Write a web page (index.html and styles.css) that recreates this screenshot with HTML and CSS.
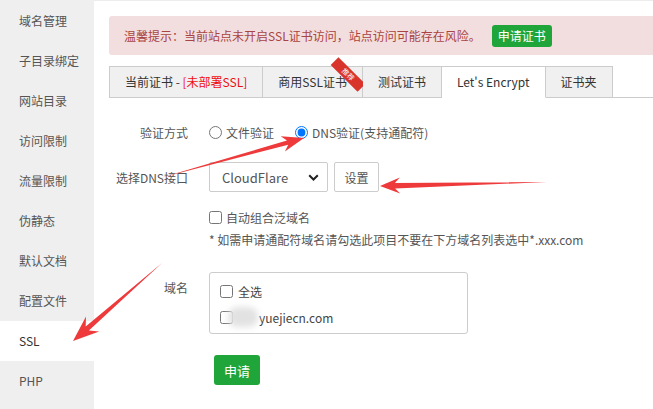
FILE: index.html
```html
<!DOCTYPE html>
<html lang="zh-CN">
<head>
    <meta charset="UTF-8">
    <meta name="viewport" content="width=device-width, initial-scale=1.0">
    <title>网站设置 - SSL</title>
    <link rel="stylesheet" href="styles.css">
</head>
<body>
    <div class="page">
        <!-- left menu -->
        <aside class="side">
            <a class="side-item">域名管理</a>
            <a class="side-item">子目录绑定</a>
            <a class="side-item">网站目录</a>
            <a class="side-item">访问限制</a>
            <a class="side-item">流量限制</a>
            <a class="side-item">伪静态</a>
            <a class="side-item">默认文档</a>
            <a class="side-item">配置文件</a>
            <a class="side-item active">SSL</a>
            <a class="side-item">PHP</a>
        </aside>

        <main class="main">
            <div class="alert">
                <span>温馨提示：当前站点未开启SSL证书访问，站点访问可能存在风险。</span>
                <button class="btn btn-green btn-sm">申请证书</button>
            </div>

            <ul class="tabs">
                <li>当前证书 - <span class="red">[未部署SSL]</span></li>
                <li class="has-badge">商用SSL证书<span class="badge">推荐</span></li>
                <li>测试证书</li>
                <li class="on">Let's Encrypt</li>
                <li>证书夹</li>
            </ul>

            <form class="ssl-form" onsubmit="return false">
                <div class="row row-1">
                    <span class="label">验证方式</span>
                    <label class="opt"><input type="radio" name="check_type"> 文件验证</label>
                    <label class="opt"><input type="radio" name="check_type" checked> DNS验证(支持通配符)</label>
                </div>
                <div class="row row-2">
                    <span class="label">选择DNS接口</span>
                    <div class="select">
                        <span>CloudFlare</span>
                        <svg width="11" height="7" viewBox="0 0 11 7"><path d="M1.2 1.2 5.5 5.5 9.8 1.2" fill="none" stroke="#222" stroke-width="2"/></svg>
                    </div>
                    <button type="button" class="btn btn-line">设置</button>
                </div>
                <div class="row row-3">
                    <span class="label"></span>
                    <label class="opt"><input type="checkbox"> 自动组合泛域名</label>
                </div>
                <div class="row row-4">
                    <span class="label"></span>
                    <span class="note">* 如需申请通配符域名请勾选此项目不要在下方域名列表选中*.xxx.com</span>
                </div>
                <div class="row row-5">
                    <span class="label label-top">域名</span>
                    <div class="domains">
                        <label class="domain"><input type="checkbox"> 全选</label>
                        <label class="domain"><input type="checkbox"><span class="mask"></span>yuejiecn.com</label>
                    </div>
                </div>
                <div class="row row-6">
                    <span class="label"></span>
                    <button class="btn btn-green btn-apply">申请</button>
                </div>
            </form>
        </main>
    </div>

    <!-- red hand-drawn pointers -->
    <svg class="marks" width="653" height="409" viewBox="0 0 653 409">
        <polygon points="160,178 288.2,144.7 284.9,151.6 304,138 280.7,136.2 287,140.5"/>
        <polygon points="547,182 394.9,183 399.8,177.5 380,186 400.2,193.5 395.1,188.6"/>
        <polygon points="162,263 85.7,326.6 86,316.4 73,341 99.2,331.4 88.9,330.4"/>
    </svg>
</body>
</html>
```

FILE: styles.css
```css
body {
    margin: 0;
    padding: 0;
    font-family: "Noto Sans CJK SC", "Noto Sans", sans-serif;
    font-size: 12px;
    color: #333;
    background-color: #fff;
    position: relative;
    overflow: hidden;
}
.page {
    display: flex;
    height: 409px;
}
.side {
    width: 94px;
    flex: none;
    background-color: #efefef;
    padding-top: 1px;
}
.side-item {
    display: block;
    height: 40px;
    line-height: 40px;
    padding-left: 19px;
    color: #555;
}
.side-item.active {
    background-color: #fff;
    color: #333;
}
.main {
    flex: 1;
    min-width: 0;
    border-top: 1px solid #ececec;
    padding-left: 15px;
}
.alert {
    display: flex;
    align-items: center;
    height: 39px;
    margin-top: 15px;
    padding: 0 15px;
    background-color: #f2dede;
    color: #a94442;
    border-radius: 3px 0 0 3px;
    white-space: nowrap;
}
.btn {
    font-family: inherit;
    cursor: pointer;
    border-radius: 3px;
}
.btn-green {
    background-color: #20a53a;
    color: #fff;
    border: none;
}
.btn-sm {
    height: 22px;
    padding: 0 6px;
    margin-left: 11px;
    font-size: 12px;
}
.tabs {
    display: flex;
    list-style: none;
    margin: 11px 0 0;
    padding: 0;
    border-bottom: 1px solid #ccc;
    white-space: nowrap;
}
.tabs li {
    position: relative;
    height: 30px;
    line-height: 30px;
    padding: 0 15px;
    margin-bottom: -1px;
    background-color: #f0f0f0;
    border: 1px solid #ccc;
    border-left: none;
    color: #333;
}
.tabs li:first-child {
    border-left: 1px solid #ccc;
}
.tabs li.on {
    background-color: #fff;
    border-bottom-color: #fff;
}
.red {
    color: #ef0e0e;
}
.badge {
    position: absolute;
    top: 2px;
    left: 66px;
    width: 38px;
    height: 11px;
    line-height: 11px;
    background-color: #d9342b;
    color: #fff;
    font-size: 7px;
    text-align: center;
    transform: rotate(45deg);
}
.ssl-form {
    padding-top: 24px;
}
.row {
    display: flex;
    align-items: center;
}
.label {
    width: 79px;
    margin-right: 21px;
    flex: none;
    text-align: right;
    color: #555;
}
.opt {
    display: flex;
    align-items: center;
    color: #555;
}
.opt input {
    margin: 0 4px 0 0;
}
.row-1 {
    height: 20px;
    margin-bottom: 20px;
}
.row-1 .opt {
    margin-right: 21px;
}
.row-2 {
    height: 30px;
    margin-bottom: 15px;
}
.select {
    display: flex;
    align-items: center;
    justify-content: space-between;
    box-sizing: border-box;
    width: 119px;
    height: 30px;
    padding: 0 8px 0 12px;
    border: 1px solid #ccc;
    border-radius: 2px;
    font-size: 13px;
    color: #555;
}
.btn-line {
    box-sizing: border-box;
    width: 45px;
    height: 30px;
    margin-left: 6px;
    padding: 0;
    background-color: #fff;
    border: 1px solid #ccc;
    border-radius: 2px;
    font-size: 12px;
    color: #555;
}
.row-3 {
    height: 20px;
    margin-bottom: 2px;
}
.row-4 {
    height: 20px;
    margin-bottom: 23px;
}
.note {
    color: #555;
}
.row-5 {
    align-items: flex-start;
}
.label-top {
    line-height: 20px;
    padding-top: 6px;
}
.domains {
    box-sizing: border-box;
    width: 259px;
    height: 62px;
    padding: 5px 10px 3px;
    border: 1px solid #ccc;
    border-radius: 3px;
}
.domain {
    display: flex;
    align-items: center;
    height: 26px;
    color: #444;
    font-size: 12px;
}
.domain input {
    margin: 0 5px 0 0;
}
.mask {
    display: inline-block;
    width: 30px;
    height: 20px;
    margin: 0 1px 0 -10px;
    background-color: #e2e2e2;
    border-radius: 9px;
    filter: blur(3px);
}
.row-6 {
    margin-top: 21px;
}
.btn-apply {
    height: 30px;
    margin-left: 5px;
    padding: 0 10px;
    font-size: 13px;
}
.marks {
    position: absolute;
    top: 0;
    left: 0;
    pointer-events: none;
    fill: #ee3a3a;
}
```
